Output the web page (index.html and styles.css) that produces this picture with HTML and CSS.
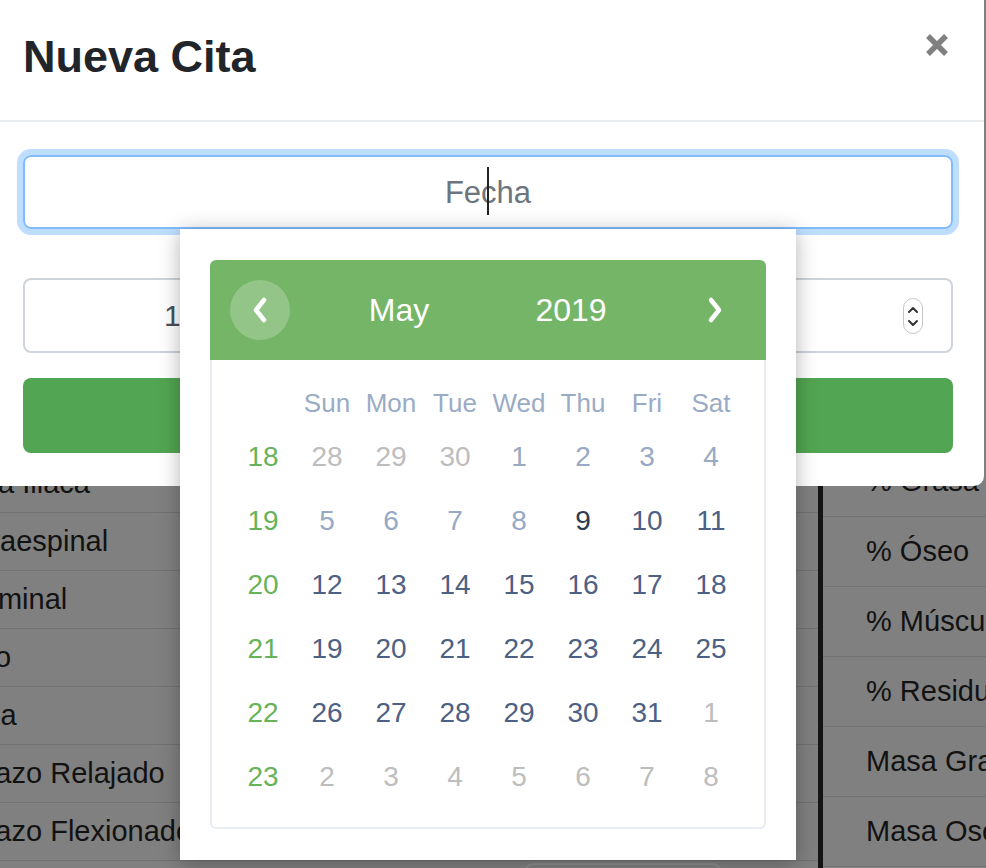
FILE: index.html
```html
<!DOCTYPE html>
<html lang="es">
<head>
<meta charset="utf-8">
<title>Nueva Cita</title>
<link rel="stylesheet" href="styles.css">
</head>
<body>
<div class="backdrop">
  <div class="tbl-left">
    <div class="row r-crest">Pliegue Cresta Iliaca</div>
    <div class="row">Pliegue Supraespinal</div>
    <div class="row r-abd">Pliegue Abdominal</div>
    <div class="row r-muslo">Pliegue Muslo</div>
    <div class="row r-pierna">Pliegue Pierna</div>
    <div class="row r-brazo">Perímetro Brazo Relajado</div>
    <div class="row r-brazo">Perímetro Brazo Flexionado</div>
    <div class="row row-input"><span class="bg-input"></span></div>
  </div>
  <div class="divider"></div>
  <div class="tbl-right">
    <div class="row">% Grasa</div>
    <div class="row">% Óseo</div>
    <div class="row">% Músculo</div>
    <div class="row">% Residual</div>
    <div class="row">Masa Grasa</div>
    <div class="row">Masa Osea</div>
  </div>
</div>

<div class="modal">
  <div class="modal-header">
    <h1 class="modal-title">Nueva Cita</h1>
    <button class="close" aria-label="Cerrar">
      <svg width="24" height="24" viewBox="0 0 24 24"><path d="M3 3 L21 21 M21 3 L3 21" stroke="#808080" stroke-width="5.5" fill="none"/></svg>
    </button>
  </div>
  <div class="modal-body">
    <div class="date-field">
      <div class="date-input"><span class="placeholder">Fecha</span><span class="caret"></span></div>
      <div class="datepicker">
        <div class="cal">
          <div class="cal-head">
            <span class="nav nav-prev"><svg width="18" height="28" viewBox="0 0 18 28"><polyline points="13,4 5,14 13,24" fill="none" stroke="#fff" stroke-width="4.5" stroke-linecap="round" stroke-linejoin="round"/></svg></span>
            <span class="cal-month">May</span>
            <span class="cal-year">2019</span>
            <span></span>
            <span class="nav nav-next"><svg width="18" height="28" viewBox="0 0 18 28"><polyline points="5,4 13,14 5,24" fill="none" stroke="#fff" stroke-width="4.5" stroke-linecap="round" stroke-linejoin="round"/></svg></span>
          </div>
          <div class="cal-body">
            <div class="dows">
              <span></span><span>Sun</span><span>Mon</span><span>Tue</span><span>Wed</span><span>Thu</span><span>Fri</span><span>Sat</span>
            </div>
            <div class="days">
              <span class="wk">18</span><span class="other">28</span><span class="other">29</span><span class="other">30</span><span class="past">1</span><span class="past">2</span><span class="past">3</span><span class="past">4</span>
              <span class="wk">19</span><span class="past">5</span><span class="past">6</span><span class="past">7</span><span class="past">8</span><span class="today">9</span><span>10</span><span>11</span>
              <span class="wk">20</span><span>12</span><span>13</span><span>14</span><span>15</span><span>16</span><span>17</span><span>18</span>
              <span class="wk">21</span><span>19</span><span>20</span><span>21</span><span>22</span><span>23</span><span>24</span><span>25</span>
              <span class="wk">22</span><span>26</span><span>27</span><span>28</span><span>29</span><span>30</span><span>31</span><span class="other">1</span>
              <span class="wk">23</span><span class="other">2</span><span class="other">3</span><span class="other">4</span><span class="other">5</span><span class="other">6</span><span class="other">7</span><span class="other">8</span>
            </div>
          </div>
        </div>
      </div>
    </div>
    <div class="time-input">
      <span class="time-value">13:00</span>
      <span class="spinner"><svg width="20" height="36" viewBox="0 0 20 36"><rect x="0.5" y="0.5" width="19" height="35" rx="9.5" fill="#fff" stroke="#c6c6c6"/><polyline points="6,14 10,10 14,14" fill="none" stroke="#333" stroke-width="2" stroke-linecap="round" stroke-linejoin="round"/><polyline points="6,23 10,27 14,23" fill="none" stroke="#333" stroke-width="2" stroke-linecap="round" stroke-linejoin="round"/></svg></span>
    </div>
    <button class="btn-save">Guardar</button>
  </div>
</div>
</body>
</html>
```

FILE: styles.css
```css
* { box-sizing: border-box; }
html, body { margin: 0; padding: 0; }
body {
  width: 986px;
  height: 868px;
  overflow: hidden;
  position: relative;
  background: #808080;
  font-family: "Liberation Sans", Arial, sans-serif;
}

/* dimmed page behind the modal */
.backdrop {
  display: flex;
  height: 868px;
  overflow: hidden;
}
.tbl-left {
  width: 818px;
  padding-top: 455px;
}
.tbl-left .row {
  height: 58px;
  border-bottom: 1px solid #727272;
  font-size: 29px;
  line-height: 57px;
  color: #121212;
  white-space: nowrap;
  text-indent: -166px;
}
.tbl-left .r-crest { text-indent: -176px; }
.tbl-left .r-abd { text-indent: -173px; }
.tbl-left .r-muslo { text-indent: -171px; }
.tbl-left .r-pierna { text-indent: -172px; }
.tbl-left .r-brazo { text-indent: -169px; }
.tbl-left .row-input {
  height: 7px;
  text-indent: 0;
  border-bottom: none;
  overflow: hidden;
}
.bg-input {
  display: block;
  margin: 2px 0 0 525px;
  width: 196px;
  height: 40px;
  border: 2px solid #8e8e8e;
  border-radius: 8px;
}
.divider {
  width: 5px;
  background: #141414;
}
.tbl-right {
  flex: 1;
  padding-top: 447px;
  overflow: hidden;
}
.tbl-right .row {
  height: 70px;
  border-bottom: 1px solid #727272;
  padding-left: 43px;
  font-size: 29px;
  line-height: 69px;
  color: #121212;
  white-space: nowrap;
}

/* modal */
.modal {
  position: absolute;
  top: -10px;
  left: -10px;
  width: 994px;
  height: 496px;
  background: #fff;
  border-radius: 10px;
  z-index: 1;
}
.modal-header {
  height: 132px;
  border-bottom: 2px solid #e9ecef;
  display: flex;
  justify-content: space-between;
  align-items: flex-start;
  padding: 40px 35px 0 33px;
}
.modal-title {
  margin: 0;
  font-size: 45px;
  font-weight: 700;
  line-height: 1.2;
  color: #212529;
}
.close {
  margin-top: 3px;
  padding: 0;
  border: none;
  background: none;
  line-height: 0;
}
.modal-body {
  padding: 33px 31px 0 33px;
}

.date-field { position: relative; }
.date-input {
  position: relative;
  height: 74px;
  border: 2px solid #80bdff;
  border-radius: 8px;
  box-shadow: 0 0 0 6px rgba(0, 123, 255, 0.25);
  display: flex;
  align-items: center;
  justify-content: center;
  padding-top: 2px;
  font-size: 31px;
  color: #6c757d;
}
.caret {
  position: absolute;
  left: calc(50% - 1px);
  top: 10px;
  width: 2px;
  height: 48px;
  background: #222;
}

.time-input {
  margin-top: 49px;
  height: 75px;
  border: 2px solid #ced4da;
  border-radius: 8px;
  display: flex;
  align-items: center;
  padding: 0 28px 0 139px;
  font-size: 30px;
  color: #495057;
}
.spinner { margin-left: auto; line-height: 0; }

.btn-save {
  display: block;
  margin-top: 25px;
  width: 100%;
  height: 75px;
  border: none;
  border-radius: 8px;
  background: #52a552;
  color: #fff;
  font-family: inherit;
  font-size: 30px;
}

/* datepicker popup */
.datepicker {
  position: absolute;
  top: 74px;
  left: 157px;
  width: 616px;
  height: 631px;
  background: #fff;
  box-shadow: 0 3px 20px rgba(0, 0, 0, 0.3);
  padding: 31px 30px;
  z-index: 5;
}
.cal { width: 556px; }
.cal-head {
  height: 100px;
  background: #75b567;
  border-radius: 6px 6px 0 0;
  display: grid;
  grid-template-columns: 60px 218px 126px 1fr 60px;
  align-items: center;
  padding: 0 21px 0 20px;
  color: #fff;
  font-size: 32px;
}
.nav {
  width: 60px;
  height: 60px;
  border-radius: 50%;
  display: flex;
  align-items: center;
  justify-content: center;
}
.nav-prev { background: rgba(255, 255, 255, 0.22); }
.cal-month, .cal-year { text-align: center; }

.cal-body {
  border: 2px solid #e9edf2;
  border-top: none;
  border-radius: 0 0 6px 6px;
  padding: 22px 21px 18px 19px;
}
.dows, .days {
  display: grid;
  grid-template-columns: repeat(8, 64px);
  text-align: center;
}
.dows {
  grid-auto-rows: 43px;
  line-height: 43px;
  font-size: 26px;
  color: #9aabc5;
}
.days {
  grid-auto-rows: 64px;
  line-height: 64px;
  font-size: 28px;
  color: #4c6183;
}
.days .wk { color: #67b35a; }
.days .other { color: #bdbdbd; }
.days .past { color: #98a9c3; }
.days .today { color: #2f3b4e; }
```
